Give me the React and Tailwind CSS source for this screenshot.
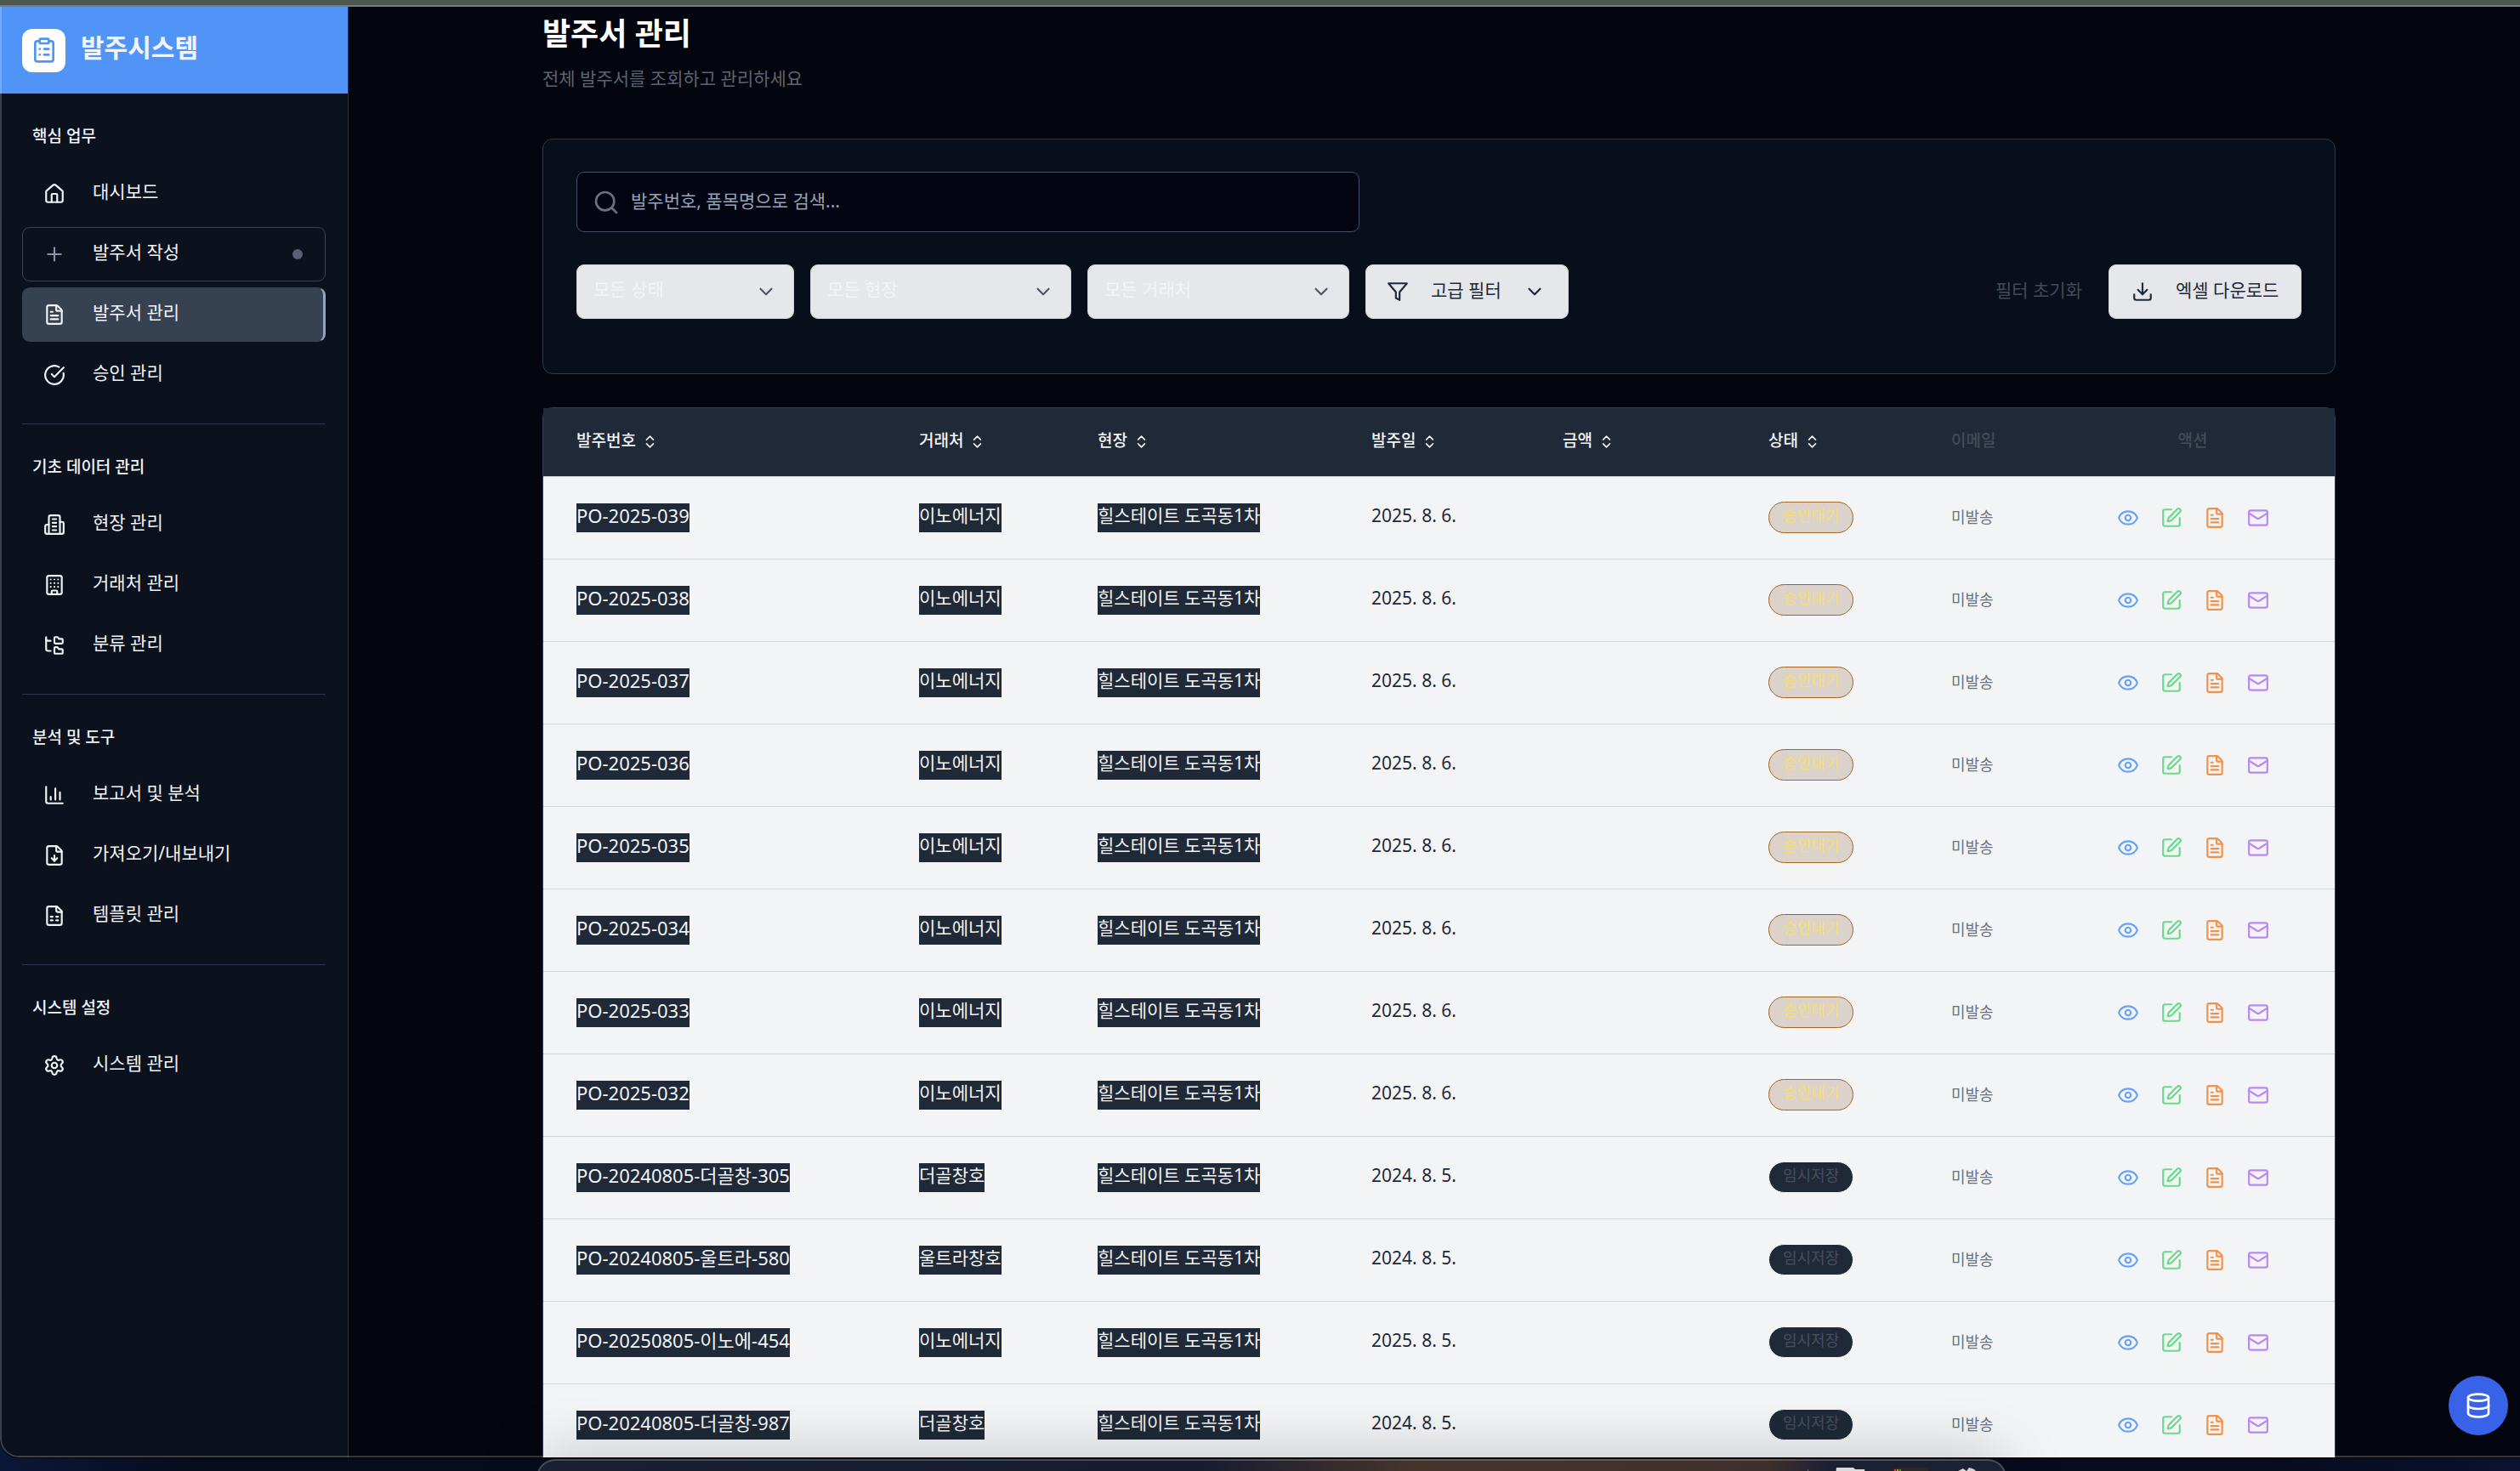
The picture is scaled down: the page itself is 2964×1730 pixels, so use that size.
import React from "react";
import {
  House, Plus, FileText, CircleCheckBig, Building, FolderTree,
  FileDown, Settings, ClipboardList, Search,
  ChevronDown, ChevronsUpDown, Download, Eye, SquarePen, Mail, Database,
} from "lucide-react";

const FileRows = (props) => (
  <svg viewBox="0 0 24 24" fill="none" stroke="currentColor" strokeWidth="2" strokeLinecap="round" strokeLinejoin="round" {...props}>
    <path d="M15 2H6a2 2 0 0 0-2 2v16a2 2 0 0 0 2 2h12a2 2 0 0 0 2-2V7Z" />
    <path d="M14 2v4a2 2 0 0 0 2 2h4" />
    <path d="M8 13h2M14 13h2M8 17h2M14 17h2" />
  </svg>
);

const Towers = (props) => (
  <svg viewBox="0 0 24 24" fill="none" stroke="currentColor" strokeWidth="2" strokeLinecap="round" strokeLinejoin="round" {...props}>
    <path d="M6 22V4a2 2 0 0 1 2-2h8a2 2 0 0 1 2 2v18Z" />
    <path d="M6 12H4a2 2 0 0 0-2 2v6a2 2 0 0 0 2 2h2" />
    <path d="M18 9h2a2 2 0 0 1 2 2v9a2 2 0 0 1-2 2h-2" />
    <path d="M10 6h4M10 10h4M10 14h4M10 18h4" />
  </svg>
);

const Bars = (props) => (
  <svg viewBox="0 0 24 24" fill="none" stroke="currentColor" strokeWidth="2" strokeLinecap="round" strokeLinejoin="round" {...props}>
    <path d="M3 3v16a2 2 0 0 0 2 2h16M18 17V9M13 17V5M8 17v-3" />
  </svg>
);

const FilterIcon = (props) => (
  <svg viewBox="0 0 24 24" fill="none" stroke="currentColor" strokeWidth="2" strokeLinecap="round" strokeLinejoin="round" {...props}>
    <polygon points="22 3 2 3 10 12.46 10 19 14 21 14 12.46 22 3" />
  </svg>
);

const SECTIONS = [
  {
    title: "핵심 업무",
    items: [
      { label: "대시보드", icon: House },
      { label: "발주서 작성", icon: Plus, kind: "outlined" },
      { label: "발주서 관리", icon: FileText, kind: "active" },
      { label: "승인 관리", icon: CircleCheckBig },
    ],
  },
  {
    title: "기초 데이터 관리",
    items: [
      { label: "현장 관리", icon: Towers },
      { label: "거래처 관리", icon: Building },
      { label: "분류 관리", icon: FolderTree },
    ],
  },
  {
    title: "분석 및 도구",
    items: [
      { label: "보고서 및 분석", icon: Bars },
      { label: "가져오기/내보내기", icon: FileDown },
      { label: "템플릿 관리", icon: FileRows },
    ],
  },
  { title: "시스템 설정", items: [{ label: "시스템 관리", icon: Settings }] },
];

const ITEM_STYLE = {
  plain: "border-transparent",
  outlined: "border-[#3b4250]",
  active: "border-transparent border-r-[3px] border-r-[#94a3b8] bg-[#364152]",
};

function NavItem({ label, icon: Icon, kind = "plain" }) {
  return (
    <li>
      <a
        href="#"
        aria-current={kind === "active" ? "page" : undefined}
        className={`flex h-16 items-center rounded-[9px] border pl-6 pr-[26px] ${ITEM_STYLE[kind]}`}
      >
        <Icon className={`size-[26px] shrink-0 ${kind === "outlined" ? "text-[#8b95a7]" : ""}`} />
        <span className="ml-8 flex-1 pb-[6px] leading-7">{label}</span>
        {kind === "outlined" && <span className="size-3 rounded-full bg-[#5a6074]" />}
      </a>
    </li>
  );
}

function Sidebar() {
  return (
    <aside className="flex w-[410px] shrink-0 flex-col border-r border-[#2a3247] bg-[#0b111d] text-[#f1f3f7]">
      <div className="flex h-[102px] shrink-0 items-center gap-[18px] bg-[#5094f8] pl-[26px]">
        <span className="flex size-[51px] items-center justify-center rounded-[12px] bg-white text-[#5094f8]">
          <ClipboardList className="size-8" />
        </span>
        <span className="pb-[6px] text-[30px] font-bold leading-9 text-[#eff4fe]">발주시스템</span>
      </div>
      <nav>
        {SECTIONS.map((s, i) => (
          <section key={s.title} className="mx-[26px]">
            {i > 0 && <hr className="border-[#2d374c]" />}
            <h2 className="mb-[22px] ml-3 pt-9 text-[19px] font-medium leading-7">{s.title}</h2>
            <ul className="flex flex-col gap-[7px] pb-[25px]">
              {s.items.map((it) => (
                <NavItem key={it.label} {...it} />
              ))}
            </ul>
          </section>
        ))}
      </nav>
    </aside>
  );
}

const CONTROL = "h-16 rounded-[9px] border border-[#d1d5db] bg-[#e5e7eb]";

function FilterSelect({ label, width }) {
  return (
    <div className={`grid items-center ${width}`}>
      <select
        aria-label={label}
        className={`${CONTROL} col-start-1 row-start-1 w-full appearance-none pb-1 pl-[19px] text-[#f3f4f6]`}
      >
        <option>{label}</option>
      </select>
      <ChevronDown className="pointer-events-none col-start-1 row-start-1 mr-5 size-[26px] justify-self-end text-[#4f5865]" />
    </div>
  );
}

function Filters() {
  return (
    <section className="mt-14 rounded-[12px] border border-[#2f3a48] bg-[#080e1a] px-[39px] pb-16 pt-[38px]">
      <div className="grid w-[921px] items-center">
        <input
          type="text"
          aria-label="발주서 검색"
          placeholder="발주번호, 품목명으로 검색..."
          className="col-start-1 row-start-1 h-[71px] w-full rounded-[9px] border border-[#475166] bg-[#030513] pb-1 pl-[63px] text-white placeholder:text-[#94a3b8]"
        />
        <Search className="pointer-events-none col-start-1 row-start-1 ml-[19px] size-8 text-[#6b7080]" />
      </div>
      <div className="mt-[38px] flex items-center gap-[19px] text-[#1f2937]">
        <FilterSelect label="모든 상태" width="w-[256px]" />
        <FilterSelect label="모든 현장" width="w-[307px]" />
        <FilterSelect label="모든 거래처" width="w-[308px]" />
        <button type="button" className={`${CONTROL} flex w-[239px] items-center pl-6`}>
          <FilterIcon className="size-[26px]" />
          <span className="ml-[26px] pb-[5px] leading-7">고급 필터</span>
          <ChevronDown className="ml-[26px] size-[26px]" />
        </button>
        <button type="button" className="ml-auto mr-3 pb-[5px] leading-7 text-[#434a57]">
          필터 초기화
        </button>
        <button type="button" className={`${CONTROL} flex w-[227px] items-center pl-[26px]`}>
          <Download className="size-[26px]" />
          <span className="ml-[26px] pb-[5px] leading-7">엑셀 다운로드</span>
        </button>
      </div>
    </section>
  );
}

const COLUMNS = [
  { label: "발주번호", width: "w-[403px]" },
  { label: "거래처", width: "w-[210px]" },
  { label: "현장", width: "w-[322px]" },
  { label: "발주일", width: "w-[225px]" },
  { label: "금액", width: "w-[242px]" },
  { label: "상태", width: "w-[215px]" },
];

const ROWS = [
  ...["039", "038", "037", "036", "035", "034", "033", "032"].map((n) => ({
    no: `PO-2025-${n}`, vendor: "이노에너지", date: "2025. 8. 6.", pending: true,
  })),
  { no: "PO-20240805-더골창-305", vendor: "더골창호", date: "2024. 8. 5." },
  { no: "PO-20240805-울트라-580", vendor: "울트라창호", date: "2024. 8. 5." },
  { no: "PO-20250805-이노에-454", vendor: "이노에너지", date: "2025. 8. 5." },
  { no: "PO-20240805-더골창-987", vendor: "더골창호", date: "2024. 8. 5." },
];

const ACTIONS = [
  { label: "보기", icon: Eye, color: "text-[#67a2f7]" },
  { label: "수정", icon: SquarePen, color: "text-[#6bd98a]" },
  { label: "문서", icon: FileText, color: "text-[#f0924b]" },
  { label: "메일", icon: Mail, color: "text-[#bb86f5]" },
];

function Mark({ children, size = "" }) {
  return (
    <span className={`inline-block h-[34px] whitespace-nowrap bg-[#1f2937] align-middle leading-7 text-[#f3f4f6] ${size}`}>
      {children}
    </span>
  );
}

function Badge({ pending }) {
  return (
    <span
      className={`inline-block h-[37px] whitespace-nowrap rounded-full border px-4 align-middle text-[18px] leading-[30px] ${
        pending ? "border-[#a1661f] bg-[#dbd2cb] text-[#f5df6b]" : "border-[#f3f4f6] bg-[#1f2937] text-[#454e5c]"
      }`}
    >
      {pending ? "승인대기" : "임시저장"}
    </span>
  );
}

function Orders() {
  return (
    <section className="mt-[39px] rounded-t-[12px] border border-[#334155]">
      <table className="w-full table-fixed border-collapse text-left">
        <thead className="bg-[#1f2937] text-[19px] text-[#f3f4f6]">
          <tr className="h-[80px] border-b border-[#d1d5db]">
            {COLUMNS.map((c) => (
              <th key={c.label} scope="col" className={`${c.width} pl-[39px] font-medium`}>
                <button type="button" className="flex items-center gap-[7px]">
                  <span className="pb-1 leading-7">{c.label}</span>
                  <ChevronsUpDown className="size-[19px]" />
                </button>
              </th>
            ))}
            <th scope="col" className="w-[156px] pb-1 pl-[39px] font-medium text-[#434c5a]">이메일</th>
            <th scope="col" className="pb-1 text-center font-medium text-[#434c5a]">액션</th>
          </tr>
        </thead>
        <tbody className="bg-[#f3f4f6] text-[#1f2937]">
          {ROWS.map((r) => (
            <tr key={r.no} className="h-[97px] border-b border-[#d1d5db]">
              <td className="pl-[39px]"><Mark size="text-[22px]">{r.no}</Mark></td>
              <td className="pl-[39px]"><Mark>{r.vendor}</Mark></td>
              <td className="pl-[39px]"><Mark>힐스테이트 도곡동1차</Mark></td>
              <td className="pb-[6px] pl-[39px] leading-7">{r.date}</td>
              <td />
              <td className="pl-[39px]"><Badge pending={r.pending} /></td>
              <td className="pb-[2px] pl-[39px] text-[18px] leading-7 text-[#6b7280]">미발송</td>
              <td>
                <div className="flex justify-center">
                  {ACTIONS.map(({ label, icon: Icon, color }) => (
                    <button key={label} type="button" aria-label={label} className={`flex w-[51px] justify-center ${color}`}>
                      <Icon className="size-[26px]" />
                    </button>
                  ))}
                </div>
              </td>
            </tr>
          ))}
        </tbody>
      </table>
    </section>
  );
}

function Dock() {
  return (
    <div className="mt-px flex h-10 w-[1729px] items-start justify-end rounded-t-[22px] border-2 border-b-0 border-white/20 bg-[linear-gradient(90deg,#1a2032_0%,#171c30_45%,#46352b_60%,#3d2f2c_84%,#1b2033_88%)] pr-[24px] shadow-[0_0_70px_rgba(0,0,0,0.26)]">
      <span className="mt-[10px] h-4 w-px bg-white/30" />
      <svg viewBox="0 0 36 8" className="ml-[32px] mt-[8px] h-2 w-9">
        <path d="M1 0h20l2 2h11l1 6H0z" fill="#d9dadb" />
      </svg>
      <svg viewBox="0 0 42 8" className="ml-[31px] mt-[8px] h-2 w-[42px]">
        <rect width="42" height="8" rx="2" fill="#2a2826" />
        <circle cx="3" cy="3" r="1" fill="#e0584f" />
        <circle cx="6" cy="3" r="1" fill="#e5b53c" />
        <circle cx="9" cy="3" r="1" fill="#58b84c" />
      </svg>
      <svg viewBox="0 0 36 8" className="ml-[30px] mt-[8px] h-2 w-9">
        <path d="M0 8l5-4 6-3 4 3 3-4 6 2 3 3 4-1 5 4z" fill="#d3d4d6" />
      </svg>
    </div>
  );
}

export default function App() {
  return (
    <div className="flex h-screen flex-col overflow-hidden bg-[#070c20] bg-[linear-gradient(90deg,#0a1838,#070b1d_8%,#070b1d_90%,#0b1230)] font-['Noto_Sans','Noto_Sans_CJK_KR',sans-serif] text-[21px]">
      <div className="h-2 shrink-0 border-b-2 border-[#757f79] bg-[#4b574f]" />
      <div className="relative flex min-h-0 flex-1 overflow-hidden rounded-bl-[22px] border-b border-black bg-[#03050f]">
        <Sidebar />
        <main className="min-w-0 flex-1 pl-[11px]">
          <div className="mx-auto max-w-[2109px]">
            <h1 className="pt-[10px] text-[36px] font-bold leading-[44px] text-white">발주서 관리</h1>
            <p className="mt-4 leading-[29px] text-[#5e636f]">전체 발주서를 조회하고 관리하세요</p>
            <Filters />
            <Orders />
          </div>
        </main>
        <button
          type="button"
          aria-label="데이터베이스"
          className="absolute bottom-[26px] right-[14px] flex size-[70px] items-center justify-center rounded-full bg-[#3863e8] text-white"
        >
          <Database className="size-8" />
        </button>
        <div className="pointer-events-none absolute inset-0 rounded-bl-[22px] border-b-2 border-l-2 border-white/20" />
      </div>
      <footer className="z-10 h-[15px] shrink-0 pl-[631px]">
        <Dock />
      </footer>
    </div>
  );
}
